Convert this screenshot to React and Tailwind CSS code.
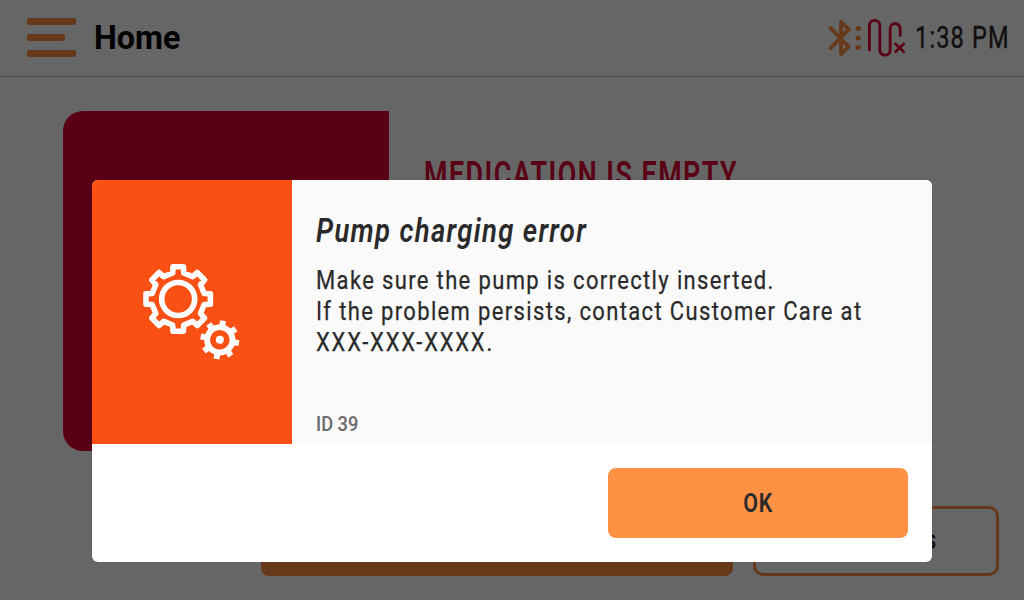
const TEETH = [0, 45, 90, 135, 180, 225, 270, 315];

function point(radius, degrees) {
  const a = ((degrees - 90) * Math.PI) / 180;
  return `${(radius * Math.cos(a)).toFixed(2)} ${(radius * Math.sin(a)).toFixed(2)}`;
}

const GEAR_OUTLINE =
  "M" +
  TEETH.map((t) => [point(26.6, t - 12), point(32.6, t - 9.2), point(32.6, t + 9.2), point(26.6, t + 12)].join(" L")).join(" L") +
  "Z";

function GearsIcon() {
  return (
    <svg className="h-[104px] w-[104px]" viewBox="0 0 104 104" fill="none" stroke="#fff">
      <g transform="translate(38.2 39)">
        <path d={GEAR_OUTLINE} strokeWidth="5.6" strokeLinejoin="round" />
        <circle r="16.5" strokeWidth="5.6" />
      </g>
      <g transform="translate(79.8 79.8) rotate(10)">
        <circle r="12.7" strokeWidth="5.8" />
        {TEETH.map((t) => (
          <path key={t} d="M0 -14V-19.4" strokeWidth="6" transform={`rotate(${t})`} />
        ))}
        <circle r="4" fill="#fff" stroke="none" />
      </g>
    </svg>
  );
}

function BluetoothIcon() {
  return (
    <svg className="h-[40px] w-[34px]" viewBox="828 18 34 40" fill="none" stroke="#ff8f44">
      <path d="M829.5 27L848.7 46.8L841 54V22L848.7 29.2L829.5 49.5" strokeWidth="3.8" strokeLinejoin="round" />
      <path d="M858.2 26.2V30.8M858.2 35.7V40.3M858.2 45.2V49.8" strokeWidth="5" />
    </svg>
  );
}

function TubingIcon() {
  return (
    <svg className="h-[40px] w-[40px]" viewBox="867 18 40 40" fill="none" stroke="#e10032" strokeWidth="2.8" strokeLinecap="round">
      <path d="M869.4 50V25.5A5.2 5.2 0 0 1 879.8 25.5V50A5.2 5.2 0 0 0 890.2 50V28.5A5 5 0 0 1 900.2 28.5V35.5" />
      <path d="M895.5 44L903.7 51.8M903.7 44L895.5 51.8" strokeWidth="2.6" />
    </svg>
  );
}

function Header() {
  return (
    <header className="flex h-[77px] items-center justify-between border-b border-[#b5b5b5] pb-px pl-[27px] pr-4">
      <div className="flex items-center gap-[18px]">
        <div className="flex w-[49px] flex-col gap-[9px]">
          <span className="h-[7px] rounded-[2px] bg-[#ff8f44]" />
          <span className="h-[7px] w-[38px] rounded-[2px] bg-[#ff8f44]" />
          <span className="h-[7px] rounded-[2px] bg-[#ff8f44]" />
        </div>
        <h1 className="origin-left scale-x-[0.95] whitespace-nowrap pb-0.5 text-[34px] font-bold leading-none text-black">Home</h1>
      </div>
      <div className="flex items-center">
        <BluetoothIcon />
        <div className="ml-[5px] flex">
          <TubingIcon />
        </div>
        <span className="ml-2 w-[93px] origin-left scale-x-[0.76] whitespace-nowrap text-[31px] leading-none tracking-[1.5px] text-[#2a2a2a] [-webkit-text-stroke:0.4px_#2a2a2a]">
          1:38 PM
        </span>
      </div>
    </header>
  );
}

function Home() {
  return (
    <div className="flex h-[600px] flex-col overflow-hidden bg-white">
      <Header />
      <main className="flex gap-[35px] pl-[63px] pt-[34px]">
        <div className="h-[340px] w-[326px] shrink-0 rounded-l-[20px] bg-[#e10032]" />
        <h2 className="mt-[37px] origin-left scale-x-[0.745] self-start whitespace-nowrap text-[36px] font-semibold tracking-[2px] text-[#e10032]">
          MEDICATION IS EMPTY
        </h2>
      </main>
      <footer className="mt-[55px] flex justify-end gap-5 pr-[25px]">
        <div className="h-[70px] w-[472px] rounded-lg bg-[#ff8f44]" />
        <div className="flex h-[70px] w-[246px] items-center justify-end rounded-[10px] border-[3px] border-[#ff8f44] pb-[3px] pr-[60px] text-[28px] font-medium text-[#2a2a2a]">
          <span className="origin-right scale-x-[0.82]">Options</span>
        </div>
      </footer>
    </div>
  );
}

function AlertDialog() {
  return (
    <div className="fixed inset-0 flex items-end justify-center bg-black/60 pb-[38px]">
      <section role="dialog" className="flex h-[382px] w-[840px] flex-col overflow-hidden rounded-md bg-white">
        <div className="flex h-[264px]">
          <div className="flex w-[200px] shrink-0 items-center justify-center bg-[#fb5014]">
            <GearsIcon />
          </div>
          <div className="flex min-w-0 flex-1 flex-col bg-[#fafafa] pl-6 text-[#2a2a2a]">
            <h2 className="mt-[31px] w-max origin-left scale-x-[0.832] whitespace-nowrap text-[33px] font-semibold italic leading-[40px] tracking-[1.6px]">
              Pump charging error
            </h2>
            <p className="mt-[14px] w-max origin-left scale-x-[0.846] whitespace-nowrap text-[26px] leading-[31px] tracking-[1.6px] [-webkit-text-stroke:0.25px_#2a2a2a]">
              Make sure the pump is correctly inserted.
              <br />
              If the problem persists, contact Customer Care at
              <br />
              <span className="tracking-[2.1px]">XXX-XXX-XXXX.</span>
            </p>
            <p className="mt-auto mb-[5px] w-max origin-left scale-x-[0.91] text-[20px] font-medium leading-[30px] text-[#6a6a6a]">ID 39</p>
          </div>
        </div>
        <div className="flex justify-end p-6">
          <button className="flex h-[70px] w-[300px] items-center justify-center rounded-lg bg-[#ff9144] text-[26px] font-semibold text-[#2a2a2a]">
            <span className="scale-x-[0.82] pt-px tracking-[1px]">OK</span>
          </button>
        </div>
      </section>
    </div>
  );
}

export default function App() {
  return (
    <div className="font-['Roboto',sans-serif]">
      <Home />
      <AlertDialog />
    </div>
  );
}
